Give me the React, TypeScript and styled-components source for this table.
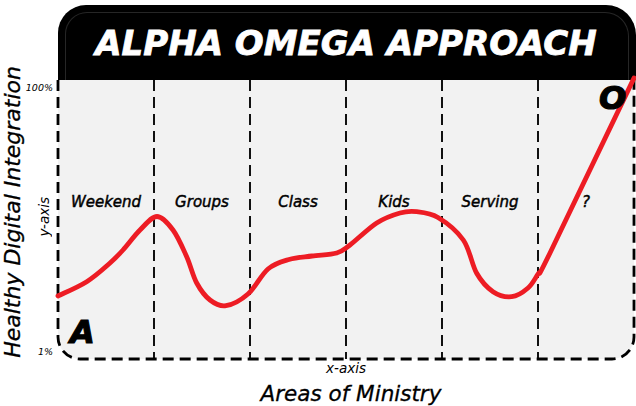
import React from "react";
import styled, { createGlobalStyle } from "styled-components";

const GlobalStyle = createGlobalStyle`
  html, body {
    margin: 0;
    padding: 0;
    background: #ffffff;
  }
  body {
    font-family: "DejaVu Sans", "Liberation Sans", sans-serif;
    color: #000;
  }
`;

const Page = styled.div`
  width: 636px;
  height: 406px;
  display: grid;
  grid-template-columns: 26px 32px 576px 2px;
  grid-template-rows: 80px 279px 47px;
  overflow: hidden;
  font-style: italic;
`;

const Banner = styled.div`
  grid-column: 3 / 5;
  grid-row: 1;
  margin-top: 5px;
  position: relative;
  background: #000;
  border-radius: 28px 30px 0 0;
  display: flex;
  align-items: center;
  justify-content: center;

  &::before {
    content: "";
    position: absolute;
    inset: 7px 7px -1px 7px;
    border: 1px solid #262626;
    border-bottom: none;
    border-radius: 22px 24px 0 0;
  }
`;

const Title = styled.h1`
  margin: 0 0 0 -2px;
  color: #fff;
  font-size: 34px;
  font-weight: 700;
  font-style: italic;
  -webkit-text-stroke: 0.8px #fff;
  line-height: 1;
  white-space: nowrap;
`;

const AxisTitle = styled.div`
  font-size: 21.5px;
  font-style: italic;
  -webkit-text-stroke: 0.3px #000;
  white-space: nowrap;
  line-height: 1;
`;

const YTitle = styled(AxisTitle)`
  grid-column: 1;
  grid-row: 1 / 3;
  align-self: end;
  justify-self: center;
  margin-bottom: 1px;
  font-size: 22px;
  writing-mode: vertical-rl;
  transform: rotate(180deg);
`;

const Ticks = styled.div`
  grid-column: 2;
  grid-row: 2;
  display: flex;
  flex-direction: column;
  align-items: flex-end;
  justify-content: space-between;
  padding: 2px 5px 1px 0;
`;

const Tick = styled.span`
  font-size: 9.5px;
  font-style: italic;
  line-height: 12px;
`;

const AxisName = styled.span<{ $vertical?: boolean }>`
  font-size: 13.5px;
  font-style: italic;
  line-height: 15px;
  white-space: nowrap;
  ${(p) =>
    p.$vertical &&
    `
    writing-mode: vertical-rl;
    transform: rotate(180deg);
    margin: 0 1px 6px 0;
  `}
`;

const Plot = styled.div`
  grid-column: 3;
  grid-row: 2;
  position: relative;
  background: #f2f2f2;
  border-radius: 0 0 22px 22px;
`;

const Columns = styled.div`
  display: grid;
  grid-template-columns: repeat(6, 1fr);
  height: 100%;
`;

const Column = styled.div<{ $divider: boolean }>`
  position: relative;
  display: flex;
  justify-content: center;
  padding-top: 113px;

  &::before {
    content: "";
    display: ${(p) => (p.$divider ? "block" : "none")};
    position: absolute;
    left: -1px;
    top: 0;
    bottom: 0;
    width: 1.5px;
    background: repeating-linear-gradient(
      to bottom,
      #111 0 11px,
      transparent 11px 17px
    );
  }
`;

const Label = styled.span`
  font-size: 15px;
  font-style: italic;
  -webkit-text-stroke: 0.45px #000;
  line-height: 18px;
  white-space: nowrap;
`;

const Chart = styled.svg`
  position: absolute;
  left: 0;
  top: 0;
  overflow: visible;
  pointer-events: none;
`;

const Marker = styled.span<{ $left: number; $top: number }>`
  position: absolute;
  left: ${(p) => p.$left}px;
  top: ${(p) => p.$top}px;
  font-size: 32px;
  font-weight: 700;
  font-style: italic;
  -webkit-text-stroke: 1.2px #000;
  line-height: 1;
`;

const XBlock = styled.div`
  grid-column: 3;
  grid-row: 3;
  display: flex;
  flex-direction: column;
  align-items: center;
  padding-top: 2px;
`;

const XTitle = styled(AxisTitle)`
  margin-top: 7px;
  margin-left: 10px;
`;

const areas = ["Weekend", "Groups", "Class", "Kids", "Serving", "?"];

// traced from the screenshot, plot coordinates (576 x 279)
const points: [number, number][] = [
  [0, 216],
  [28.7, 201.7],
  [52, 183],
  [65, 170],
  [82, 150],
  [99, 136.5],
  [115, 150],
  [128.7, 176.7],
  [138.7, 203],
  [152, 220],
  [168, 225.7],
  [190, 214],
  [210, 189],
  [231, 179.5],
  [254, 176],
  [278.7, 173],
  [292, 165],
  [318.7, 143],
  [342, 133],
  [358.7, 131.7],
  [380, 137.5],
  [405.3, 160],
  [418.7, 193.3],
  [435, 211.7],
  [453.7, 216.7],
  [470, 208],
  [480, 194],
  [492, 173],
];

function smoothPath(pts: [number, number][], end: [number, number]) {
  let d = `M${pts[0][0]},${pts[0][1]}`;
  for (let i = 0; i < pts.length - 1; i++) {
    const p0 = pts[i - 1] || pts[i];
    const p1 = pts[i];
    const p2 = pts[i + 1];
    const p3 = pts[i + 2] || end;
    const c1x = p1[0] + (p2[0] - p0[0]) / 6;
    const c1y = p1[1] + (p2[1] - p0[1]) / 6;
    const c2x = p2[0] - (p3[0] - p1[0]) / 6;
    const c2y = p2[1] - (p3[1] - p1[1]) / 6;
    d += ` C${c1x.toFixed(1)},${c1y.toFixed(1)} ${c2x.toFixed(1)},${c2y.toFixed(
      1
    )} ${p2[0]},${p2[1]}`;
  }
  return d + ` L${end[0]},${end[1]}`;
}

const frame = "M0,0 V257 A22,22 0 0 0 22,279 H554 A22,22 0 0 0 576,257 V0";

const App = () => {
  const d = smoothPath(points, [576, -2]);

  return (
    <>
      <GlobalStyle />
      <Page>
        <Banner>
          <Title>ALPHA OMEGA APPROACH</Title>
        </Banner>

        <YTitle>Healthy Digital Integration</YTitle>

        <Ticks>
          <Tick>100%</Tick>
          <AxisName $vertical>y-axis</AxisName>
          <Tick>1%</Tick>
        </Ticks>

        <Plot>
          <Columns>
            {areas.map((name, i) => (
              <Column key={name} $divider={i > 0}>
                <Label>{name}</Label>
              </Column>
            ))}
          </Columns>
          <Chart width="576" height="279" viewBox="0 0 576 279">
            <path
              d={frame}
              fill="none"
              stroke="#000"
              strokeWidth="2.8"
              strokeDasharray="11 6"
            />
            <path
              d={d}
              fill="none"
              stroke="#ed1c24"
              strokeWidth="4.8"
              strokeLinecap="round"
              strokeLinejoin="round"
            />
          </Chart>
          <Marker $left={12} $top={236}>
            A
          </Marker>
          <Marker $left={541} $top={2}>
            O
          </Marker>
        </Plot>

        <XBlock>
          <AxisName>x-axis</AxisName>
          <XTitle>Areas of Ministry</XTitle>
        </XBlock>
      </Page>
    </>
  );
};

export default App;
